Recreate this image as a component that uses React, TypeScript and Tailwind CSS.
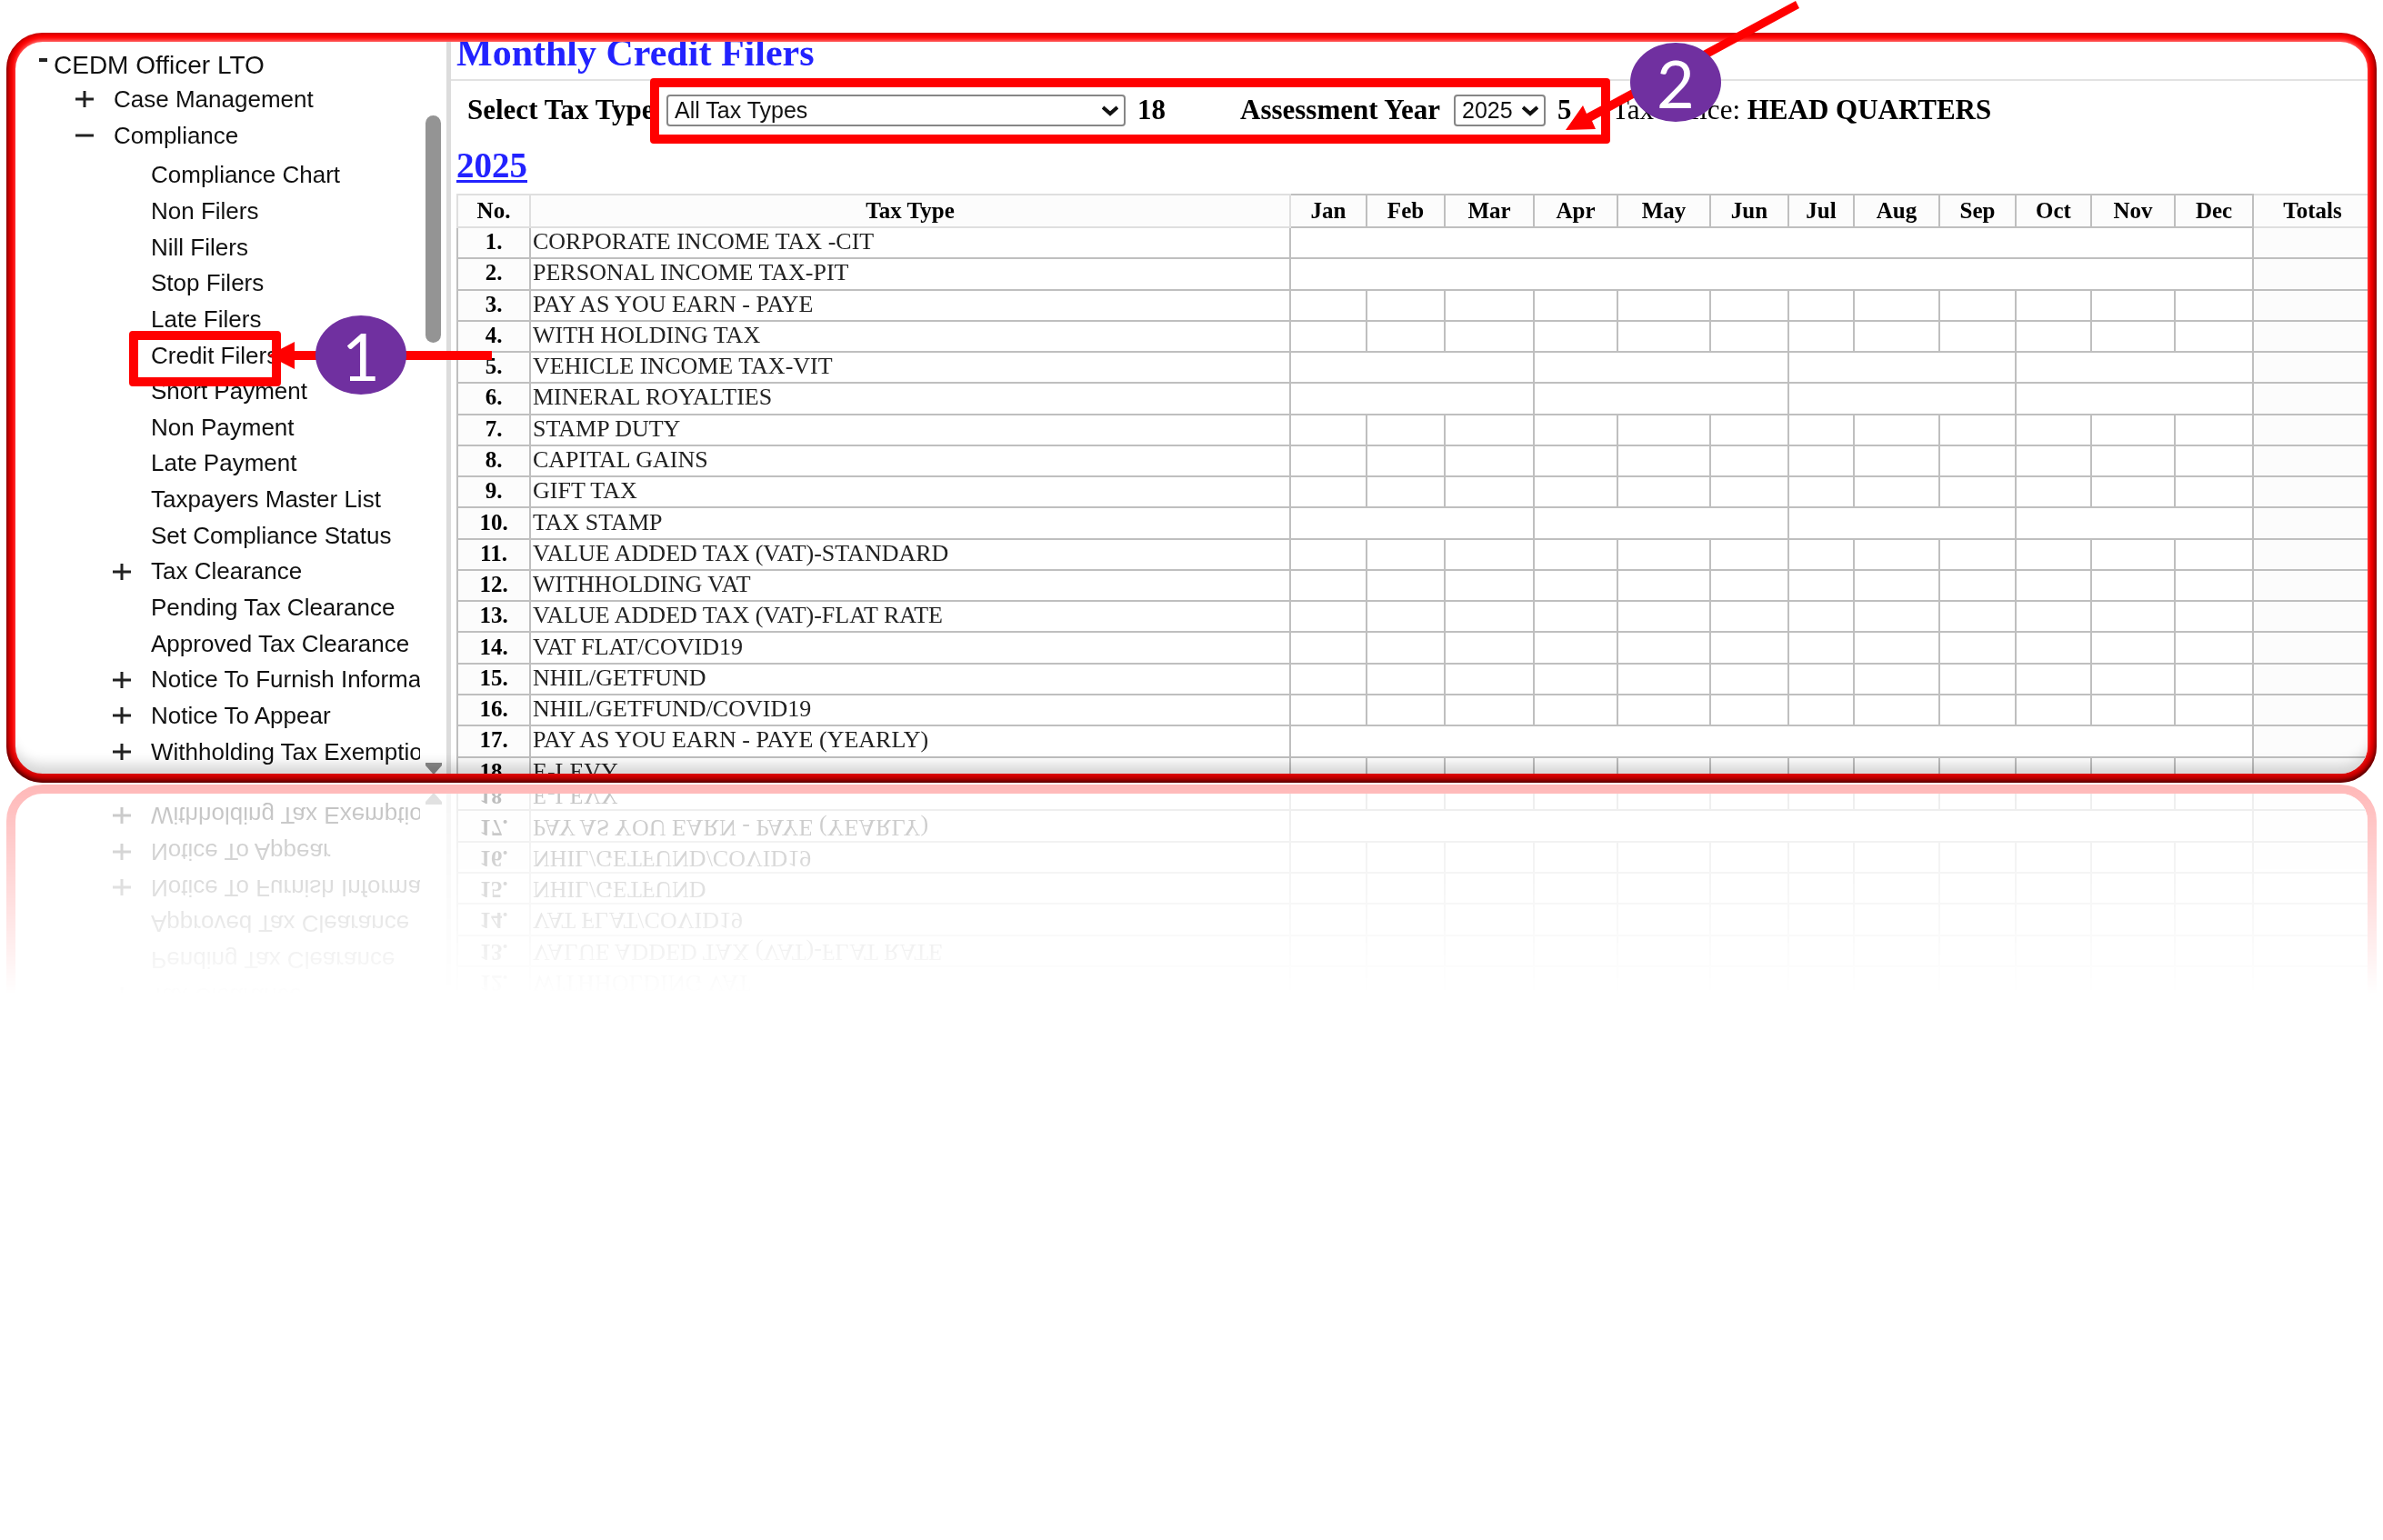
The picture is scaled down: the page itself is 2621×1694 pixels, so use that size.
import { useState } from "react";
import type { ReactNode } from "react";

type Split = "year" | "quarter" | "month";
type TreeItem = { label: string; expandable?: boolean };

const treeItems: TreeItem[] = [
  { label: "Compliance Chart" },
  { label: "Non Filers" },
  { label: "Nill Filers" },
  { label: "Stop Filers" },
  { label: "Late Filers" },
  { label: "Credit Filers" },
  { label: "Short Payment" },
  { label: "Non Payment" },
  { label: "Late Payment" },
  { label: "Taxpayers Master List" },
  { label: "Set Compliance Status" },
  { label: "Tax Clearance", expandable: true },
  { label: "Pending Tax Clearance" },
  { label: "Approved Tax Clearance" },
  { label: "Notice To Furnish Information", expandable: true },
  { label: "Notice To Appear", expandable: true },
  { label: "Withholding Tax Exemption", expandable: true },
];

const rows: { name: string; split: Split }[] = [
  { name: "CORPORATE INCOME TAX -CIT", split: "year" },
  { name: "PERSONAL INCOME TAX-PIT", split: "year" },
  { name: "PAY AS YOU EARN - PAYE", split: "month" },
  { name: "WITH HOLDING TAX", split: "month" },
  { name: "VEHICLE INCOME TAX-VIT", split: "quarter" },
  { name: "MINERAL ROYALTIES", split: "quarter" },
  { name: "STAMP DUTY", split: "month" },
  { name: "CAPITAL GAINS", split: "month" },
  { name: "GIFT TAX", split: "month" },
  { name: "TAX STAMP", split: "quarter" },
  { name: "VALUE ADDED TAX (VAT)-STANDARD", split: "month" },
  { name: "WITHHOLDING VAT", split: "month" },
  { name: "VALUE ADDED TAX (VAT)-FLAT RATE", split: "month" },
  { name: "VAT FLAT/COVID19", split: "month" },
  { name: "NHIL/GETFUND", split: "month" },
  { name: "NHIL/GETFUND/COVID19", split: "month" },
  { name: "PAY AS YOU EARN - PAYE (YEARLY)", split: "year" },
  { name: "E-LEVY", split: "month" },
];

const months = ["Jan", "Feb", "Mar", "Apr", "May", "Jun", "Jul", "Aug", "Sep", "Oct", "Nov", "Dec"];
const cellCount: Record<Split, number> = { year: 1, quarter: 4, month: 12 };

function Toggle({ open }: { open?: boolean }) {
  return (
    <svg viewBox="0 0 22 22" className="size-[22px] shrink-0" fill="none" stroke="#222" strokeWidth="3" aria-hidden="true">
      <path d={open ? "M1 11h20" : "M1 11h20M11 2v18"} />
    </svg>
  );
}

function Sidebar() {
  return (
    <nav className="flex w-[474px] shrink-0 text-[26px] text-[#111]">
      <div className="min-w-0 flex-1 overflow-hidden whitespace-nowrap pt-2">
        <button className="flex h-[35px] items-center pl-[26px] text-[28px] leading-[35px]">
          <span className="mb-3 h-1 w-[9px] bg-[#222]" />
          <span className="ml-[7px]">CEDM Officer LTO</span>
        </button>
        <button className="flex h-10 items-center gap-[21px] pl-[65px]">
          <Toggle />
          Case Management
        </button>
        <button className="flex h-10 items-center gap-[21px] pl-[65px]">
          <Toggle open />
          Compliance
        </button>
        <ul className="mt-1 flex h-[674px] flex-col">
          {treeItems.map((item) => (
            <li key={item.label} className="flex flex-1 items-center">
              {item.expandable ? (
                <button className="flex items-center gap-[21px] pl-[106px]">
                  <Toggle />
                  {item.label}
                </button>
              ) : (
                <a href="#" className="pl-[149px]">
                  {item.label}
                </a>
              )}
            </li>
          ))}
        </ul>
      </div>
      <div className="flex w-[29px] flex-col items-center justify-between pt-[81px]">
        <div className="h-[250px] w-[17px] rounded-full bg-[#949494]" />
        <svg viewBox="0 0 18 12" className="h-3 w-[18px]" fill="#8a8a8a" aria-hidden="true">
          <path d="M0 0h18v3l-8 9H8L0 3z" />
        </svg>
      </div>
    </nav>
  );
}

function Dropdown({
  id,
  className,
  value,
  onChange,
  children,
}: {
  id: string;
  className: string;
  value: string;
  onChange: (value: string) => void;
  children: ReactNode;
}) {
  return (
    <div className={`relative flex shrink-0 ${className}`}>
      <select
        id={id}
        value={value}
        onChange={(e) => onChange(e.target.value)}
        className="h-[35px] w-full appearance-none rounded-[4px] border-2 border-[#868686] bg-white pl-[7px] font-['Liberation_Sans',sans-serif] text-[25px] font-normal leading-[30px] text-[#111]"
      >
        {children}
      </select>
      <svg
        viewBox="0 0 18 12"
        className="pointer-events-none absolute right-2 top-3 h-3 w-[18px]"
        fill="none"
        stroke="#111"
        strokeWidth="4"
        aria-hidden="true"
      >
        <path d="M1 2l8 7 8-7" />
      </svg>
    </div>
  );
}

function CreditTable() {
  const line = "border-2 border-[#bfbfbf]";
  const soft = "border-2 border-[#dfdfdf]";
  return (
    <table className="h-[655px] w-full table-fixed border-collapse text-[25px] leading-[28px] text-[#222]">
      <colgroup>
        <col className="w-[80px]" />
        <col />
        <col className="w-[84px]" />
        <col className="w-[86px]" />
        <col className="w-[98px]" />
        <col className="w-[92px]" />
        <col className="w-[102px]" />
        <col className="w-[86px]" />
        <col className="w-[72px]" />
        <col className="w-[94px]" />
        <col className="w-[84px]" />
        <col className="w-[83px]" />
        <col className="w-[92px]" />
        <col className="w-[86px]" />
        <col className="w-[126px]" />
      </colgroup>
      <thead className="text-black">
        <tr className="h-[36px] bg-[#fcfcfc]">
          <th className={soft}>No.</th>
          <th className={soft}>Tax Type</th>
          {months.map((m) => (
            <th key={m} className={line}>
              {m}
            </th>
          ))}
          <th className="border-y-2 border-[#dfdfdf] pl-1">Totals</th>
        </tr>
      </thead>
      <tbody>
        {rows.map((row, i) => {
          const count = cellCount[row.split];
          return (
            <tr key={row.name}>
              <th scope="row" className={`bg-[#fcfcfc] pb-0.5 text-black ${line}`}>
                {i + 1}.
              </th>
              <td className={`whitespace-nowrap pb-0.5 pl-0.5 text-[26px] ${line}`}>{row.name}</td>
              {Array.from({ length: count }, (_, c) => (
                <td key={c} colSpan={12 / count} className={line} />
              ))}
              <td className="border-y-2 border-l-2 border-[#bfbfbf] bg-[#fcfcfc]" />
            </tr>
          );
        })}
      </tbody>
    </table>
  );
}

function Content() {
  const [taxType, setTaxType] = useState("All Tax Types");
  const [year, setYear] = useState("2025");
  return (
    <main className="min-w-0 flex-1 border-l-[5px] border-[#dcdcdc] font-['Liberation_Serif',serif] text-black">
      <div className="border-b-2 border-[#e2e2e2] pb-1.5 pl-[6px]">
        <h1 className="-mt-3 pt-px text-[42px] font-bold leading-[46px] text-[#2222ff]">Monthly Credit Filers</h1>
      </div>
      <div className="flex h-[66px] items-center whitespace-nowrap pb-0.5 pl-[18px] text-[31px] font-bold">
        <label htmlFor="tax-type" className="w-[219px] shrink-0">
          Select Tax Type
        </label>
        <Dropdown id="tax-type" className="w-[505px]" value={taxType} onChange={setTaxType}>
          <option>All Tax Types</option>
          {rows.map((row) => (
            <option key={row.name}>{row.name}</option>
          ))}
        </Dropdown>
        <span className="ml-[13px] w-[113px] shrink-0">18</span>
        <label htmlFor="year" className="w-[235px] shrink-0">
          Assessment Year
        </label>
        <Dropdown id="year" className="w-[101px]" value={year} onChange={setYear}>
          <option>2025</option>
          <option>2024</option>
        </Dropdown>
        <span className="ml-[13px] w-[60px] shrink-0">5</span>
        <span>
          <span className="font-normal">Tax Office:</span> HEAD QUARTERS
        </span>
      </div>
      <section className="pl-[6px] pt-[5px]">
        <h2 className="mb-[9px] text-[39px] font-bold leading-[44px]">
          <a href="#" className="text-[#2222ff] underline decoration-[3px] underline-offset-[3px]">
            {year}
          </a>
        </h2>
        <CreditTable />
      </section>
    </main>
  );
}

function Badge({ children, className }: { children: ReactNode; className: string }) {
  return (
    <span
      className={`absolute flex h-[87px] w-[100px] items-center justify-center rounded-[50%] bg-[#7030a0] font-['Lato',sans-serif] text-[72px] leading-none text-white ${className}`}
    >
      {children}
    </span>
  );
}

function Annotations() {
  return (
    <div className="pointer-events-none absolute inset-0">
      <div className="absolute left-[142px] top-[364px] h-[61px] w-[167px] rounded-[4px] border-[10px] border-[#ff0000]" />
      <div className="absolute left-[715px] top-[86px] h-[72px] w-[1056px] rounded-[4px] border-[10px] border-[#ff0000]" />
      <svg width="2000" height="450" className="absolute left-0 top-0 max-w-none" fill="#ff0000" aria-hidden="true">
        <path d="M295 391l29-15v10h217v10H324v10z" />
        <path d="M1722 143l19-27 4 9L1975 1l4 8L1751 133l4 9z" />
      </svg>
      <Badge className="left-[347px] top-[347px]">1</Badge>
      <Badge className="left-[1793px] top-[47px]">2</Badge>
    </div>
  );
}

export default function App() {
  return (
    <div className="relative min-h-screen overflow-hidden bg-white pt-9 font-['Liberation_Sans',sans-serif]">
      <div className="relative mx-[7px]">
        <div className="flex h-[825px] overflow-hidden rounded-[40px] border-[10px] border-[#ff0000] bg-white [-webkit-box-reflect:below_2px_linear-gradient(to_bottom,transparent_72%,rgba(0,0,0,0.28))]">
          <Sidebar />
          <Content />
        </div>
        <div className="pointer-events-none absolute inset-0 rounded-[40px] shadow-[inset_3px_0_4px_rgba(0,0,0,0.25),inset_-3px_0_4px_rgba(0,0,0,0.25),inset_0_-4px_4px_rgba(0,0,0,0.45),inset_0_-20px_14px_rgba(0,0,0,0.16)]" />
        <div className="pointer-events-none absolute inset-[10px] rounded-[30px] shadow-[0_-2px_4px_rgba(255,255,255,0.45)]" />
      </div>
      <Annotations />
    </div>
  );
}
